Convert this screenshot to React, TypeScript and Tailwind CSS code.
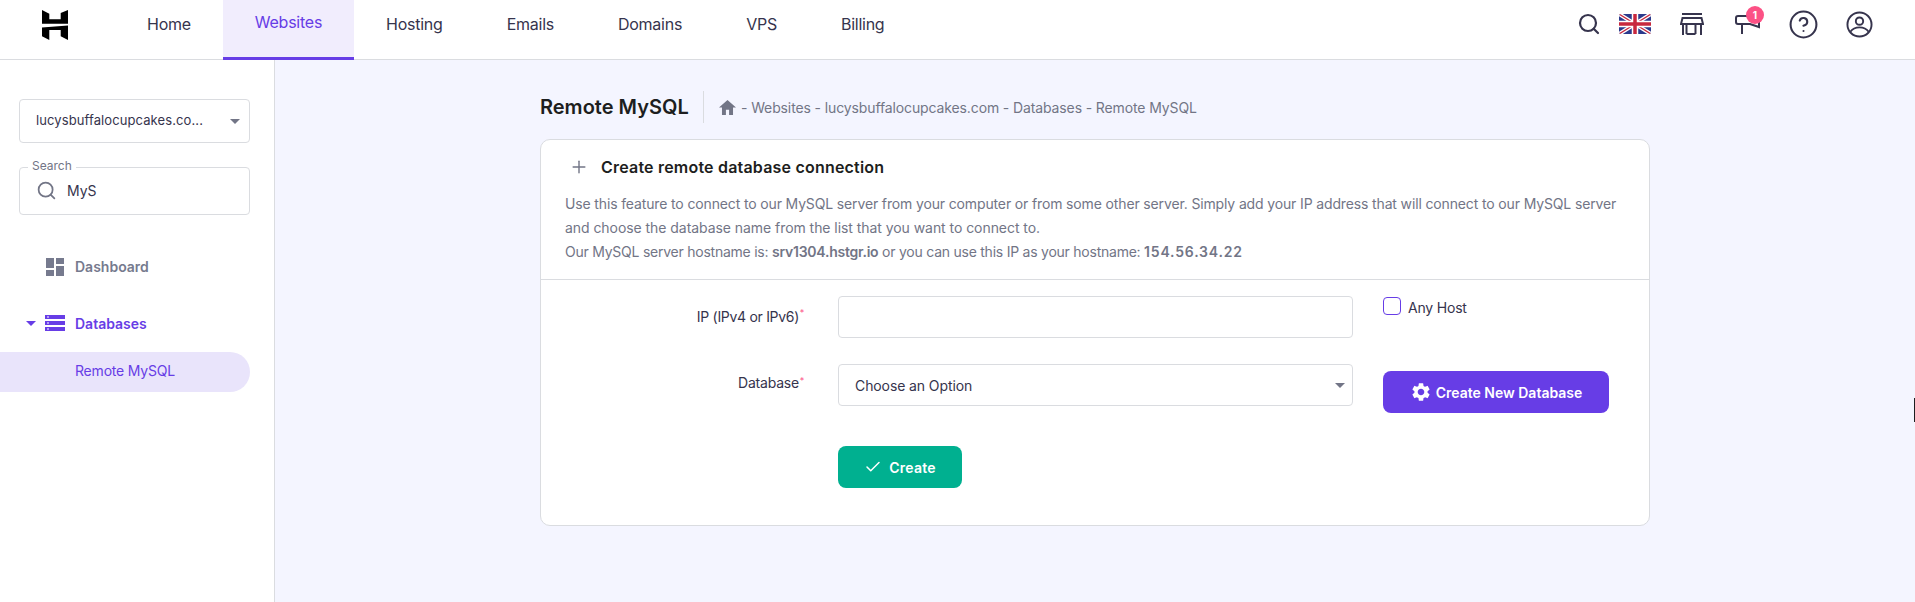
import { Check, CircleHelp, Plus, Search } from 'lucide-react';
import { MdSettings } from 'react-icons/md';

const NAV_ITEMS = ['Home', 'Websites', 'Hosting', 'Emails', 'Domains', 'VPS', 'Billing'];

const Caret = ({ className }: { className: string }) => (
  <svg viewBox="0 0 10 5" className={className} fill="currentColor">
    <path d="M0 0h10L5 5z" />
  </svg>
);

const Logo = () => (
  <svg viewBox="0 0 26 30" className="w-[26px] h-[30px]" fill="#000">
    <path d="M0 0L7.300 3.700V9.300H18.700V3L26 0V13.700H0z" />
    <path d="M0 17.500L26 15.500V30L18.700 26.300V20H7.300V30L0 26.300z" />
  </svg>
);

const Flag = () => (
  <svg viewBox="0 0 32 20" className="w-8 h-5 rounded-[2px]">
    <rect width="32" height="20" fill="#2b3a8c" />
    <path d="M0 0l32 20M32 0L0 20" stroke="#fff" strokeWidth="4" />
    <path d="M0 0l32 20M32 0L0 20" stroke="#c8283e" strokeWidth="1.300" />
    <path d="M16 0v20M0 10h32" stroke="#fff" strokeWidth="6.500" />
    <path d="M16 0v20M0 10h32" stroke="#c8283e" strokeWidth="3.500" />
  </svg>
);

const Store = () => (
  <svg viewBox="0 0 24 22" className="w-6 h-[22px]" fill="none" stroke="#36344d" strokeWidth="2">
    <path d="M2 1h20M2.500 5h19L23 11H1zM3 11v11M21 11v11M6.500 21h9M6.500 11v10M15.500 11v10" />
  </svg>
);

const Megaphone = () => (
  <svg viewBox="0 0 26 22" className="w-[26px] h-[22px]" fill="none" stroke="#36344d" strokeWidth="2">
    <path d="M13 3H3a2 2 0 0 0-2 2v4a2 2 0 0 0 2 2h12l9 3V6M7 11v10" />
  </svg>
);

const Account = () => (
  <svg viewBox="0 0 28 28" className="w-[27px] h-[27px]" fill="none" stroke="#36344d" strokeWidth="2">
    <circle cx="14" cy="14" r="12.500" />
    <circle cx="14" cy="10.500" r="3.800" />
    <path d="M4.500 21.500C7 18 10 17 14 17s7 1 9.500 4.500" />
  </svg>
);

const DashboardIcon = () => (
  <svg viewBox="0 0 18 18" className="w-[18px] h-[18px]" fill="#767a8e">
    <path d="M0 0h8v10H0zM10 0h8v6h-8zM10 8h8v10h-8zM0 12h8v6H0z" />
  </svg>
);

const DatabaseIcon = () => (
  <svg viewBox="0 0 20 16" className="w-5 h-4" fill="#673de6">
    <path d="M0 0h20v4H0zM0 6h20v4H0zM0 12h20v4H0z" />
    <path d="M2 1.500h2v1H2zM2 7.500h2v1H2zM2 13.500h2v1H2z" fill="#fff" />
  </svg>
);

const HomeIcon = () => (
  <svg viewBox="0 0 16 14" className="w-[17px] h-[15px]" fill="#727586">
    <path d="M6.500 14V9h3v5h3.700V7H16L8 0 0 7h2.800v7z" />
  </svg>
);

export default function App() {
  return (
    <div className="min-h-[602px] bg-[#f4f5ff] text-[#36344d] font-['Inter','Noto_Sans',sans-serif] relative overflow-hidden">
      {/* Top bar */}
      <header className="h-[60px] bg-white border-b border-[#dadce0] flex items-center">
        <div className="w-[115px] pl-[42px] pb-[10px]">
          <Logo />
        </div>
        <nav className="flex h-[60px]">
          {NAV_ITEMS.map((item) => (
            <div
              key={item}
              className={`px-8 flex items-center text-[16px] tracking-[-0.25px] pb-[12px] ${
                item === 'Websites' ? 'bg-[#f1edfd] text-[#673de6] border-b-[3px] border-[#673de6]' : 'text-[#36344d]'
              }`}
            >
              {item}
            </div>
          ))}
        </nav>
        <div className="ml-auto flex items-center pr-[42px] pb-[11px]">
          <Search className="w-6 h-6 text-[#36344d] mr-[18px]" strokeWidth={2.2} />
          <Flag />
          <div className="ml-[29px]">
            <Store />
          </div>
          <div className="ml-[31px] relative">
            <Megaphone />
            <span className="absolute -top-[7px] left-[11px] w-[18px] h-[18px] rounded-full bg-[#fc5185] text-white text-[10px] font-bold flex items-center justify-center">
              1
            </span>
          </div>
          <CircleHelp className="w-[31px] h-[31px] ml-[27px] text-[#36344d]" strokeWidth={1.6} />
          <div className="ml-[27px]">
            <Account />
          </div>
        </div>
      </header>

      <div className="flex min-h-[542px]">
        {/* Sidebar */}
        <aside className="w-[275px] shrink-0 bg-white border-r border-[#dadce0] pt-[39px]">
          <div className="ml-[19px] w-[231px] h-11 border border-[#dadce0] rounded flex items-center justify-between pl-4 pr-[9px] text-[13px] tracking-[0.1px]">
            <span>lucysbuffalocupcakes.co...</span>
            <Caret className="w-[10px] h-[5px] text-[#727586]" />
          </div>
          <div className="ml-[19px] mt-6 w-[231px] h-[48px] border border-[#dadce0] rounded flex items-center pb-[2px] pl-[16px] relative text-[14px]">
            <span className="absolute -top-[9px] left-[8px] bg-white px-1 text-[12px] leading-[14px] text-[#727586]">
              Search
            </span>
            <Search className="w-[21px] h-[21px] text-[#727586] mr-[10px]" />
            <span>MyS</span>
          </div>
          <div className="mt-[42px] ml-[46px] flex items-center h-[19px] gap-[11px] text-[14px] font-semibold text-[#767a8e]">
            <DashboardIcon />
            <span>Dashboard</span>
          </div>
          <div className="mt-[37px] ml-[26px] flex items-center h-[20px] text-[14px] font-semibold text-[#673de6]">
            <Caret className="w-[10px] h-[5px] mr-[9px]" />
            <DatabaseIcon />
            <span className="ml-[10px]">Databases</span>
          </div>
          <div className="mt-[19px] w-[250px] h-10 bg-[#e9e4fb] rounded-r-[20px] flex items-center pb-[3px] pl-[75px] text-[14px] tracking-[-0.2px] text-[#673de6]">
            Remote MySQL
          </div>
        </aside>

        {/* Main content */}
        <main className="pl-[265px] pt-[31px]">
          <div className="flex items-center h-[32px]">
            <h1 className="text-[20px] font-semibold text-[#1d1e20] w-[164px] border-r border-[#dadce0] h-[32px] leading-[32px]">
              Remote MySQL
            </h1>
            <div className="ml-[15px] flex items-center text-[14px] tracking-[-0.12px] text-[#727586] gap-[5px]">
              <HomeIcon />
              <span>- Websites - lucysbuffalocupcakes.com - Databases - Remote MySQL</span>
            </div>
          </div>

          <section className="mt-4 w-[1110px] h-[387px] bg-white border border-[#dadce0] rounded-[10px]">
            <div className="h-[140px] border-b border-[#dadce0]">
              <div className="flex items-center pl-7 pt-[17px]">
                <Plus className="w-[20px] h-[20px] text-[#727586]" strokeWidth={1.700} />
                <h2 className="ml-[12px] text-[16px] font-semibold text-[#1d1e20] tracking-[0.2px] leading-5">
                  Create remote database connection
                </h2>
              </div>
              <div className="mt-[15px] pl-[24px] text-[14px] leading-[24px] text-[#727586]">
                <p className="tracking-[-0.14px]">
                  Use this feature to connect to our MySQL server from your computer or from some other server. Simply add your IP address that will connect to our MySQL server
                </p>
                <p className="tracking-[-0.055px]">and choose the database name from the list that you want to connect to.</p>
                <p className="tracking-[-0.24px]">
                  Our MySQL server hostname is: <b className="font-semibold">srv1304.hstgr.io</b> or you can use this IP as your hostname: <b className="font-semibold tracking-[0.8px]">154.56.34.22</b>
                </p>
              </div>
            </div>

            <div className="pt-4 flex">
              <div className="w-[297px] shrink-0">
                <div className="h-[42px] text-right text-[14px] tracking-[-0.3px] pr-[39px] pt-[13px] leading-4 relative">
                  IP (IPv4 or IPv6)
                  <span className="absolute right-[34px] top-[9px] text-[9px] text-[#fc5185]">*</span>
                </div>
                <div className="mt-[26px] h-[42px] text-right text-[14px] tracking-[-0.2px] pr-[39px] pt-[11px] leading-4 relative">
                  Database
                  <span className="absolute right-[34px] top-[9px] text-[9px] text-[#fc5185]">*</span>
                </div>
              </div>
              <div className="w-[515px] shrink-0">
                <div className="h-[42px] border border-[#dadce0] rounded" />
                <div className="mt-[26px] h-[42px] border border-[#dadce0] rounded flex items-center justify-between pl-4 pr-[7px] text-[14px] tracking-[-0.1px]">
                  <span>Choose an Option</span>
                  <Caret className="w-[10px] h-[5px] text-[#727586]" />
                </div>
                <button className="mt-10 w-[124px] h-[42px] rounded-lg bg-[#00b090] text-white text-[14px] tracking-[0.2px] font-semibold flex items-center justify-center gap-[7px]">
                  <Check className="w-[18px] h-[18px]" strokeWidth={2} />
                  Create
                </button>
              </div>
              <div className="ml-[30px]">
                <div className="flex items-center h-[18px] mt-px gap-[7px] text-[14px] tracking-[-0.2px]">
                  <span className="w-[18px] h-[18px] rounded-[4px] border-[1.5px] border-[#673de6]" />
                  <span className="pt-[2px]">Any Host</span>
                </div>
                <button className="mt-[56px] w-[226px] h-[42px] rounded-lg bg-[#673de6] text-white text-[14px] font-semibold flex items-center justify-center gap-[4px]">
                  <MdSettings className="w-[22px] h-[22px]" />
                  Create New Database
                </button>
              </div>
            </div>
          </section>
        </main>
      </div>

      {/* screen capture cursor sliver */}
      <span className="absolute right-0 top-[398px] w-px h-6 bg-[#1d1e20]" />
    </div>
  );
}
